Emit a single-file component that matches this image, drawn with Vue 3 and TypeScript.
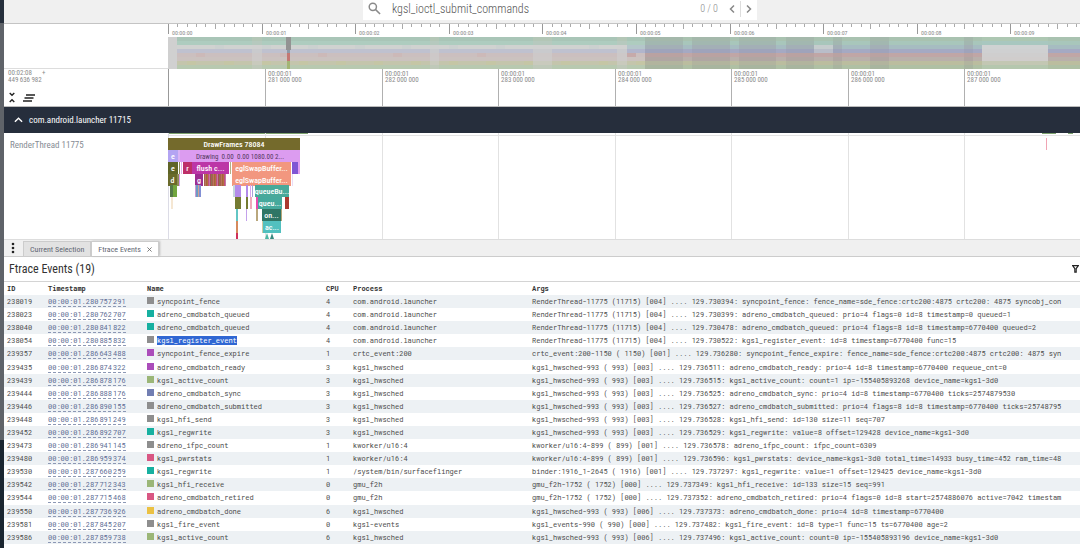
<script setup lang="ts">
import { ref } from 'vue'

interface Slice {
  x: number
  row: number
  w: number
  fill: string
  label?: string
  dark?: boolean
}

interface FtraceEvent {
  id: number
  ts: [string, string, string]
  name: string
  color: string
  cpu: number
  process: string
  args: string
  selected?: boolean
}

const query = ref('kgsl_ioctl_submit_commands')
const activeTab = ref('ftrace')

/* Overview ruler: one major tick per second, ten divisions each */
const SECOND = 93.6
const seconds = Array.from({ length: 10 }, (_, i) => ({ x: Math.round(i * SECOND), label: `00:00:0${i}` }))
const minorTicks = Array.from({ length: 98 }, (_, i) => ({ x: Math.round(i * SECOND / 10), h: i % 5 === 0 ? 5 : 3 }))

/* CPU load heat map, eight rows of 4px */
const quiet = ['#a9c5b7', '#aeccbf', '#d0d2d0', '#bfc1cf', '#cbbfbf', '#cbc2bf', '#c4c5ac', '#b8c9b0']
const calm = ['#b3c6b6', '#b6c9be', '#d0d1d0', '#c9cacd', '#cdc8c8', '#cdc9c8', '#c9cabd', '#bfc9b9']
const busy = ['#a9c2b0', '#a8c6bb', '#a6bcc1', '#a5a9c3', '#c0a6a6', '#b9b0ab', '#bbbd9f', '#afc0a4']
const dense = ['#a4b8ab', '#a2b7b0', '#a3afb6', '#9fa3bb', '#b9a2a2', '#b0a6a3', '#b2b49e', '#a8b59f']
const sparse = ['#adc7b2', '#a8c7bf', '#cfd2d2', '#cfd0d1', '#cfcece', '#d0cdcc', '#c3c7b3', '#b5c7ae']
const cells: { x: number; y: number; w: number; fill: string }[] = []
for (let i = 1; i < 98; i++) {
  let p = quiet
  if ([9, 28, 39, 40, 48].includes(i)) p = calm
  if (i >= 51) p = busy
  if ((i >= 51 && i <= 68 && i % 5 !== 0) || [71, 75, 76, 85].includes(i)) p = dense
  if (i >= 87 && i <= 93) p = sparse
  const x = Math.round(i * SECOND / 10)
  const w = Math.round((i + 1) * SECOND / 10) - x
  p.forEach((fill, r) => {
    let f = fill
    if (p === quiet && r === 4 && [3, 12, 16, 24, 33].includes(i)) f = '#ccb9b8'
    if (p === quiet && r === 2 && i % 5 === 0) f = '#cbd0cf'
    if (p === quiet && r === 6 && i % 4 === 2) f = '#c5c6a5'
    if ((i === 49 || i === 50) && r === 2) f = '#b4c6ca'
    if ((i === 49 || i === 50) && r === 3) f = '#b1b5cc'
    if (i === 49 && r === 4) f = '#c6aaaa'
    if ((i === 69 || i === 70) && r === 2) f = '#c5cccd'
    if ((i === 69 || i === 70) && r === 3) f = '#b9bdc9'
    cells.push({ x, y: r * 4, w, fill: f })
  })
}

/* Detailed time axis */
const marks = Array.from({ length: 7 }, (_, i) => ({
  x: Math.round(97 + i * 116.5),
  ms: `${281 + i}\u2009000\u2009000`,
}))

/* Call-stack depth rows of the flame chart */
const rowTop = [0, 12, 24, 36, 47, 59, 71, 83, 95]
const slices: Slice[] = [
  { x: 0, row: 0, w: 132, fill: '#746a2c', label: 'DrawFrames 78084' },
  { x: 0, row: 1, w: 10, fill: '#b3a4f2', label: 'e' },
  { x: 10, row: 1, w: 2, fill: '#d9b2f5' },
  { x: 12, row: 1, w: 120, fill: '#dc9cf0', label: 'Drawing  0.00  0.00 1080.00 2...', dark: true },
  { x: 0, row: 2, w: 10, fill: '#5f6427', label: 'e' },
  { x: 11, row: 2, w: 1, fill: '#8c8a55' },
  { x: 13, row: 2, w: 1, fill: '#e4b6ee' },
  { x: 15, row: 2, w: 9, fill: '#bd2f68', label: 'r' },
  { x: 24, row: 2, w: 37, fill: '#bc36a7', label: 'flush c...' },
  { x: 62, row: 2, w: 1, fill: '#b2b189' },
  { x: 64, row: 2, w: 59, fill: '#f2977f', label: 'eglSwapBuffer...' },
  { x: 124, row: 2, w: 6, fill: '#8055d4' },
  { x: 130, row: 2, w: 2, fill: '#df9df0' },
  { x: 0, row: 3, w: 9, fill: '#6a6a2b', label: 'd' },
  { x: 9, row: 3, w: 2, fill: '#8f8d56' },
  { x: 11, row: 3, w: 1, fill: '#d49df0' },
  { x: 27, row: 3, w: 8, fill: '#9c2e92', label: 'g' },
  { x: 64, row: 3, w: 59, fill: '#f2977f', label: 'eglSwapBuffer...' },
  { x: 124, row: 3, w: 1, fill: '#eadcf6' },
  { x: 2, row: 4, w: 3, fill: '#557a4a' },
  { x: 5, row: 4, w: 4, fill: '#72a63e' },
  { x: 27, row: 4, w: 1, fill: '#cc9bd1' },
  { x: 28, row: 4, w: 2, fill: '#6d9bc5' },
  { x: 30, row: 4, w: 1, fill: '#d1a18f' },
  { x: 31, row: 4, w: 2, fill: '#8290d5' },
  { x: 65, row: 4, w: 2, fill: '#c5d6dc' },
  { x: 67, row: 4, w: 6, fill: '#b38bea' },
  { x: 78, row: 4, w: 2, fill: '#b38bea' },
  { x: 82, row: 4, w: 1, fill: '#dba7f0' },
  { x: 84, row: 4, w: 1, fill: '#a7a3d7' },
  { x: 87, row: 4, w: 34, fill: '#48a99a', label: 'queueBu...' },
  { x: 3, row: 5, w: 2, fill: '#f5e7d3' },
  { x: 67, row: 5, w: 6, fill: '#747b32' },
  { x: 78, row: 5, w: 2, fill: '#747b32' },
  { x: 82, row: 5, w: 2, fill: '#eeaaba' },
  { x: 88, row: 5, w: 2, fill: '#e64aae' },
  { x: 90, row: 5, w: 24, fill: '#45a99c', label: 'queu...' },
  { x: 117, row: 5, w: 4, fill: '#ab3930' },
  { x: 68, row: 6, w: 2, fill: '#62c6c4' },
  { x: 78, row: 6, w: 1, fill: '#c3a1eb' },
  { x: 88, row: 6, w: 2, fill: '#b9a77d' },
  { x: 94, row: 6, w: 19, fill: '#2f7565', label: 'on...' },
  { x: 113, row: 6, w: 1, fill: '#b6a678' },
  { x: 68, row: 7, w: 2, fill: '#d58a5d' },
  { x: 94, row: 7, w: 1, fill: '#d2caa2' },
  { x: 95, row: 7, w: 18, fill: '#52c0bf', label: 'ac...' },
  { x: 68, row: 8, w: 2, fill: '#cf3059' },
]
const stripeColors = ['#a85e51', '#c17aa5', '#a5623e', '#8c7150', '#c44f7d', '#b67a58', '#a94a58', '#b3703e']
for (let i = 0; i < 22; i++) slices.push({ x: 36 + i, row: 3, w: 1, fill: stripeColors[(i * 5) % 8] })

const C = { gray: '#8e8e8e', teal: '#17b0a0', purple: '#ab4dba', green: '#9bb677', indigo: '#727eb2', pink: '#d95783', amber: '#ebc143' }
const launcher = 'com.android.launcher'
const render = 'RenderThread-11775 (11715) [004] .... 129.'
const hw3 = 'kgsl_hwsched-993 ( 993) [003] .... 129.'
const hw6 = 'kgsl_hwsched-993 ( 993) [006] .... 129.'
const kw = 'kworker/u16:4-899 ( 899) [001] .... 129.'
const gmu = 'gmu_f2h-1752 ( 1752) [000] .... 129.'
const a = '00:00:01.'
const events: FtraceEvent[] = [
  { id: 238019, ts: [a + '280', '757', '291'], name: 'syncpoint_fence', color: C.gray, cpu: 4, process: launcher, args: render + '730394: syncpoint_fence: fence_name=sde_fence:crtc200:4875 crtc200: 4875 syncobj_con' },
  { id: 238023, ts: [a + '280', '762', '707'], name: 'adreno_cmdbatch_queued', color: C.teal, cpu: 4, process: launcher, args: render + '730399: adreno_cmdbatch_queued: prio=4 flags=0 id=8 timestamp=0 queued=1' },
  { id: 238040, ts: [a + '280', '841', '822'], name: 'adreno_cmdbatch_queued', color: C.teal, cpu: 4, process: launcher, args: render + '730478: adreno_cmdbatch_queued: prio=4 flags=8 id=8 timestamp=6770400 queued=2' },
  { id: 238054, ts: [a + '280', '885', '832'], name: 'kgsl_register_event', color: C.gray, cpu: 4, process: launcher, args: render + '730522: kgsl_register_event: id=8 timestamp=6770400 func=15', selected: true },
  { id: 239357, ts: [a + '286', '643', '488'], name: 'syncpoint_fence_expire', color: C.purple, cpu: 1, process: 'crtc_event:200', args: 'crtc_event:200-1150 ( 1150) [001] .... 129.736280: syncpoint_fence_expire: fence_name=sde_fence:crtc200:4875 crtc200: 4875 syn' },
  { id: 239435, ts: [a + '286', '874', '322'], name: 'adreno_cmdbatch_ready', color: C.purple, cpu: 3, process: 'kgsl_hwsched', args: hw3 + '736511: adreno_cmdbatch_ready: prio=4 id=8 timestamp=6770400 requeue_cnt=0' },
  { id: 239439, ts: [a + '286', '878', '176'], name: 'kgsl_active_count', color: C.green, cpu: 3, process: 'kgsl_hwsched', args: hw3 + '736515: kgsl_active_count: count=1 ip=-155405893268 device_name=kgsl-3d0' },
  { id: 239444, ts: [a + '286', '888', '176'], name: 'adreno_cmdbatch_sync', color: C.indigo, cpu: 3, process: 'kgsl_hwsched', args: hw3 + '736525: adreno_cmdbatch_sync: prio=4 id=8 timestamp=6770400 ticks=2574879530' },
  { id: 239446, ts: [a + '286', '890', '155'], name: 'adreno_cmdbatch_submitted', color: C.gray, cpu: 3, process: 'kgsl_hwsched', args: hw3 + '736527: adreno_cmdbatch_submitted: prio=4 flags=8 id=8 timestamp=6770400 ticks=25748795' },
  { id: 239448, ts: [a + '286', '891', '249'], name: 'kgsl_hfi_send', color: C.gray, cpu: 3, process: 'kgsl_hwsched', args: hw3 + '736528: kgsl_hfi_send: id=130 size=11 seq=707' },
  { id: 239452, ts: [a + '286', '892', '707'], name: 'kgsl_regwrite', color: C.teal, cpu: 3, process: 'kgsl_hwsched', args: hw3 + '736529: kgsl_regwrite: value=8 offset=129428 device_name=kgsl-3d0' },
  { id: 239473, ts: [a + '286', '941', '145'], name: 'adreno_ifpc_count', color: C.gray, cpu: 1, process: 'kworker/u16:4', args: kw + '736578: adreno_ifpc_count: ifpc_count=6309' },
  { id: 239480, ts: [a + '286', '959', '374'], name: 'kgsl_pwrstats', color: C.pink, cpu: 1, process: 'kworker/u16:4', args: kw + '736596: kgsl_pwrstats: device_name=kgsl-3d0 total_time=14933 busy_time=452 ram_time=48' },
  { id: 239530, ts: [a + '287', '660', '259'], name: 'kgsl_regwrite', color: C.teal, cpu: 1, process: '/system/bin/surfaceflinger', args: 'binder:1916_1-2645 ( 1916) [001] .... 129.737297: kgsl_regwrite: value=1 offset=129425 device_name=kgsl-3d0' },
  { id: 239542, ts: [a + '287', '712', '343'], name: 'kgsl_hfi_receive', color: C.green, cpu: 0, process: 'gmu_f2h', args: gmu + '737349: kgsl_hfi_receive: id=133 size=15 seq=991' },
  { id: 239544, ts: [a + '287', '715', '468'], name: 'adreno_cmdbatch_retired', color: C.pink, cpu: 0, process: 'gmu_f2h', args: gmu + '737352: adreno_cmdbatch_retired: prio=4 flags=0 id=8 start=2574886076 active=7042 timestam' },
  { id: 239550, ts: [a + '287', '736', '926'], name: 'adreno_cmdbatch_done', color: C.amber, cpu: 6, process: 'kgsl_hwsched', args: hw6 + '737373: adreno_cmdbatch_done: prio=4 id=8 timestamp=6770400' },
  { id: 239581, ts: [a + '287', '845', '207'], name: 'kgsl_fire_event', color: C.gray, cpu: 0, process: 'kgsl-events', args: 'kgsl_events-990 ( 990) [000] .... 129.737482: kgsl_fire_event: id=8 type=1 func=15 ts=6770400 age=2' },
  { id: 239586, ts: [a + '287', '859', '738'], name: 'kgsl_active_count', color: C.green, cpu: 6, process: 'kgsl_hwsched', args: hw6 + '737496: kgsl_active_count: count=0 ip=-155405893196 device_name=kgsl-3d0' },
]
</script>

<template>
  <div class="shell">
    <aside class="rail"><div class="rail-top"></div><div class="rail-thumb"></div><div class="rail-end"></div></aside>
    <main class="main">
      <header class="topbar">
        <form class="omnibox" role="search" @submit.prevent>
          <svg class="search-icon" viewBox="0 0 14 14" aria-hidden="true"><circle cx="5.2" cy="5.2" r="3.9" /><path d="M8.2 8.2 L13 13" /></svg>
          <input v-model="query" class="query" type="text" aria-label="Search" spellcheck="false" />
          <span class="count">0 / 0</span>
          <button type="button" class="step" aria-label="Previous"><svg viewBox="0 0 8 10"><path d="M6 1.5 L2.5 5 L6 8.5" /></svg></button>
          <button type="button" class="step next" aria-label="Next"><svg viewBox="0 0 8 10"><path d="M2 1.5 L5.5 5 L2 8.5" /></svg></button>
        </form>
      </header>

      <section class="lane overview">
        <div class="side"></div>
        <svg class="canvas" aria-label="Overview">
          <rect v-for="t in minorTicks" :key="'m' + t.x" :x="t.x" y="0" width="1" :height="t.h" fill="#aaa" />
          <g v-for="s in seconds" :key="s.label">
            <rect :x="s.x" y="0" width="1" height="10" fill="#999" />
            <text :x="s.x + 4" y="11" class="tick">{{ s.label }}</text>
          </g>
          <g transform="translate(0 13)">
            <rect x="0" y="0" width="100%" height="33" fill="#d0d0d0" />
            <rect v-for="(c, i) in cells" :key="i" :x="c.x" :y="c.y" :width="c.w" height="5" :fill="c.fill" />
            <rect x="118" y="0" width="5" height="13" fill="#939393" />
            <rect x="119" y="13" width="3" height="3" fill="#8d9aa9" />
            <rect x="119" y="16" width="3" height="8" fill="#c47773" />
            <rect x="119" y="24" width="3" height="9" fill="#a3b575" />
          </g>
        </svg>
      </section>

      <section class="lane axis">
        <div class="side axis-side">
          <div class="offset"><span>00:02:08</span><span class="plus">+</span></div>
          <div class="offset-ns">449&#8201;636&#8201;982</div>
          <div class="tools">
            <button type="button" aria-label="Collapse all"><svg class="collapse" viewBox="0 0 8 12"><path d="M1.5 1 L4 3.5 L6.5 1 M1.5 11 L4 8.5 L6.5 11" /></svg></button>
            <button type="button" aria-label="Clear pinned tracks"><svg class="clear" viewBox="0 0 12 8"><path d="M3 1 H12 M1.5 4 H10.5 M0 7 H9" /></svg></button>
          </div>
        </div>
        <svg class="canvas" aria-label="Time axis">
          <rect x="0" y="0" width="1" height="100%" fill="#999" />
          <g v-for="m in marks" :key="m.ms">
            <rect :x="m.x" y="0" width="1" height="100%" fill="#b0b0b0" />
            <text :x="m.x + 3" y="7" class="label">00:00:01</text>
            <text :x="m.x + 3" y="13" class="label">{{ m.ms }}</text>
          </g>
        </svg>
      </section>

      <button type="button" class="group">
        <svg class="chevron" viewBox="0 0 10 6"><path d="M1 5 L5 1 L9 5" /></svg>
        <span>com.android.launcher 11715</span>
      </button>

      <section class="lane track">
        <div class="side track-name">RenderThread 11775</div>
        <svg class="canvas" aria-label="RenderThread slices">
          <rect x="0" y="0" width="140" height="1" fill="#7da26f" />
          <rect x="874" y="0" width="14" height="1" fill="#7da26f" />
          <rect x="900" y="0" width="5" height="1" fill="#7da26f" />
          <rect x="0" y="2" width="100%" height="1" fill="#e4e4e4" />
          <rect x="0" y="0" width="1" height="100%" fill="#dcdce6" />
          <rect v-for="m in marks" :key="m.ms" :x="m.x" y="0" width="1" height="100%" fill="#e2e2e2" />
          <rect x="878" y="5" width="1" height="12" fill="#f0a5b4" />
          <g v-for="(s, i) in slices" :key="i">
            <rect :x="s.x" :y="5 + rowTop[s.row]" :width="s.w" height="12" :fill="s.fill" />
            <text v-if="s.label" :x="s.x + s.w / 2" :y="14 + rowTop[s.row]" class="slice" :class="{ dark: s.dark }">{{ s.label }}</text>
          </g>
          <path d="M97 106 L99 100 L101 106 Z" fill="#4db8a4" />
          <path d="M102 106 L104 100 L106 106 Z" fill="#398a80" />
        </svg>
      </section>

      <section class="panel">
        <nav class="tabs" role="tablist">
          <button type="button" class="more" aria-label="More"><svg viewBox="0 0 4 12"><circle cx="2" cy="2" r="1.3" /><circle cx="2" cy="6" r="1.3" /><circle cx="2" cy="10" r="1.3" /></svg></button>
          <button type="button" role="tab" class="tab" :class="{ active: activeTab === 'selection' }" @click="activeTab = 'selection'">Current Selection</button>
          <button type="button" role="tab" class="tab" :class="{ active: activeTab === 'ftrace' }" @click="activeTab = 'ftrace'">
            Ftrace Events <svg class="close" viewBox="0 0 6 6"><path d="M0.5 0.5 L5.5 5.5 M5.5 0.5 L0.5 5.5" /></svg>
          </button>
        </nav>
        <div class="title">
          <h1>Ftrace Events (19)</h1>
          <button type="button" class="filter" aria-label="Filter"><svg viewBox="0 0 8 9"><path d="M0.7 0.7 H7.3 L4.8 4 V8 H3.2 V4 Z" /></svg></button>
        </div>
        <table>
          <colgroup><col class="c-id" /><col class="c-ts" /><col class="c-name" /><col class="c-cpu" /><col class="c-proc" /><col /></colgroup>
          <thead>
            <tr><th>ID</th><th>Timestamp</th><th>Name</th><th>CPU</th><th>Process</th><th>Args</th></tr>
          </thead>
          <tbody>
            <tr v-for="e in events" :key="e.id">
              <td>{{ e.id }}</td>
              <td><a href="#" class="ts"><span>{{ e.ts[0] }}</span><span>{{ e.ts[1] }}</span><span>{{ e.ts[2] }}</span></a></td>
              <td><i class="swatch" :style="{ background: e.color }"></i><span :class="{ selected: e.selected }">{{ e.name }}</span></td>
              <td>{{ e.cpu }}</td>
              <td>{{ e.process }}</td>
              <td>{{ e.args }}</td>
            </tr>
          </tbody>
        </table>
      </section>
    </main>
  </div>
</template>

<style>
html, body { margin: 0; background: #fff; }
</style>

<style scoped>
.shell {
  --sans: "Roboto Condensed", "Liberation Sans Narrow", Roboto, sans-serif;
  --mono: "Roboto Mono", "DejaVu Sans Mono", "Liberation Mono", monospace;
  display: flex;
  height: 100vh;
  overflow: hidden;
  font-family: var(--sans);
  color: #3c4043;
}
button { border: 0; padding: 0; margin: 0; background: none; font: inherit; color: inherit; display: flex; align-items: center; }
svg { display: block; }
.rail { width: 4px; flex: none; display: flex; flex-direction: column; background: #1b2630; }
.rail-top { height: 23px; background: #262f3c; }
.rail-thumb { flex: 417; background: #5f6369; }
.rail-end { flex: 108; }
.main { flex: 1; min-width: 0; display: flex; flex-direction: column; }

.topbar { height: 23px; flex: none; background: #f0f0f0; display: flex; align-items: flex-start; }
.omnibox { margin-left: 359px; flex: 0 1 394px; height: 20px; background: #fff; display: flex; align-items: center; min-width: 0; box-sizing: border-box; padding: 0 0 3px 5px; }
.search-icon { width: 13px; height: 13px; flex: none; fill: none; stroke: #8a8a8a; stroke-width: 1.6; }
.query { flex: 1; min-width: 0; border: 0; outline: 0; background: none; padding: 0; margin-left: 11px; font-family: var(--sans); font-size: 12px; font-weight: 300; color: #555; }
.count { font-size: 10px; font-weight: 300; color: #888; margin-right: 5px; }
.step { width: 17px; height: 16px; justify-content: center; }
.step.next { width: 17px; border-left: 1px solid #ddd; }
.step svg { width: 8px; height: 10px; fill: none; stroke: #888; stroke-width: 1.5; }

.lane { display: flex; flex: none; }
.side { width: 164px; flex: none; box-sizing: border-box; }
.canvas { flex: 1; min-width: 0; height: 100%; overflow: hidden; }
.overview { height: 46px; border-top: 1px solid #c4c4c4; box-sizing: border-box; }
.overview .side { border-bottom: 1px solid #ddd; }
.tick { font-size: 6px; fill: #888; }
.axis { height: 38px; box-sizing: border-box; border-bottom: 1px solid #bbb; }
.label { font-size: 7px; fill: #8c8c8c; }
.axis-side { padding: 1px 4px 0; font-size: 7px; line-height: 7px; color: #8c8c8c; }
.offset { display: flex; gap: 10px; }
.tools { display: flex; gap: 7px; margin-top: 8px; }
.tools svg { fill: none; stroke: #222; stroke-width: 1.5; }
.collapse { width: 8px; height: 11px; }
.clear { width: 12px; height: 8px; }
.group { height: 26px; flex: none; background: #262e3c; color: #fff; padding-left: 10px; gap: 6px; font-size: 9px; }
.chevron { width: 9px; height: 6px; fill: none; stroke: #fff; stroke-width: 1.6; }
.track { height: 106px; overflow: hidden; }
.track-name { padding: 6px 6px; font-size: 9px; line-height: 12px; color: #868c94; }
.slice { font-size: 8px; font-weight: 500; fill: #fff; text-anchor: middle; white-space: pre; }
.slice.dark { fill: #54395f; font-size: 7px; font-weight: 400; }

.panel { flex: 1; min-height: 0; display: flex; flex-direction: column; padding-bottom: 4px; }
.tabs { height: 18px; flex: none; box-sizing: border-box; background: #f0f0f0; border-top: 1px solid #ddd; border-bottom: 1px solid #ccc; display: flex; align-items: flex-end; font-size: 8px; color: #5f6672; }
.more { width: 19px; height: 16px; padding-left: 7px; box-sizing: border-box; }
.more svg { width: 4px; height: 12px; fill: #222; }
.tab { height: 15px; padding: 0 6px; background: #e2e2e2; border: 1px solid #ccc; border-bottom: 0; box-sizing: border-box; white-space: nowrap; gap: 6px; }
.tab.active { background: #fff; box-shadow: 1px 0 2px #bbb; }
.close { width: 5px; height: 5px; fill: none; stroke: #666; stroke-width: 1; }
.title { height: 25px; flex: none; box-sizing: border-box; display: flex; align-items: center; justify-content: space-between; padding: 0 1px 0 5px; border-bottom: 1px solid #d4d4d4; }
h1 { margin: 0; font-size: 12px; font-weight: 400; color: #333; }
.filter svg { width: 7px; height: 8px; fill: none; stroke: #222; stroke-width: 1.3; }
table { flex: 1; width: 100%; table-layout: fixed; border-collapse: collapse; font-family: var(--mono); font-size: 7px; line-height: 13px; color: #4b4b4b; }
.c-id { width: 41px; }
.c-ts { width: 99px; }
.c-name { width: 179px; }
.c-cpu { width: 27px; }
.c-proc { width: 179px; }
th, td { padding: 0 0 0 3px; text-align: left; vertical-align: middle; white-space: pre; overflow: hidden; }
th { font-weight: 700; color: #333; }
tbody tr:nth-child(odd) { background: #edf1f4; }
.ts { color: #5b6b93; text-decoration: none; border-bottom: 1px dashed #8c98b5; }
.ts span + span { margin-left: 1px; }
.swatch { display: inline-block; width: 7px; height: 7px; margin-right: 3px; }
.selected { background: #3067d3; color: #fff; }
</style>
